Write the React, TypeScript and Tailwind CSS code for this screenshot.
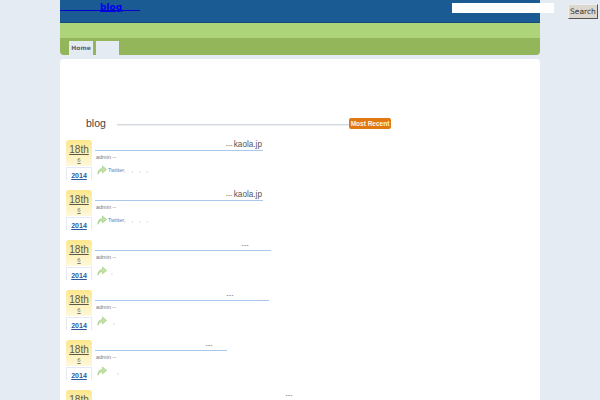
import React from 'react';

const posts = [
  { w: 'w-[168px]', title: 'kaola.jp', big: true, pr: 'pr-px', comma: '' },
  { w: 'w-[168px]', title: 'kaola.jp', big: true, pr: 'pr-px', comma: '' },
  { w: 'w-[176px]', title: '---', big: false, pr: 'pr-[22px]', comma: 'pl-[4px]' },
  { w: 'w-[174px]', title: '---', big: false, pr: 'pr-[35px]', comma: 'pl-[6px]' },
  { w: 'w-[132px]', title: '---', big: false, pr: 'pr-[14px]', comma: 'pl-[10px]' },
  { w: 'w-[220px]', title: '---', big: false, pr: 'pr-[22px]', comma: 'pl-[10px]' },
];

function Arrow() {
  return (
    <svg width="10" height="10" viewBox="0 0 11 11" className="shrink-0">
      <path
        d="M1 10.2C.6 6.400 2.600 4 6 3.800V1l4.600 3.900L6 8.800V6.200C3.900 6.100 2.300 7.600 1 10.200Z"
        fill="#c2e2a6"
        stroke="#9ac67a"
        strokeWidth="0.6"
      />
    </svg>
  );
}

function Post({ p }: { p: (typeof posts)[number] }) {
  return (
    <div className="flex h-[50px] pl-[6px]">
      <div className="w-[26px] shrink-0 text-center">
        <div className="h-[26px] rounded-t-[3px] bg-gradient-to-b from-[#fde78c] to-[#fff8da] pt-[3px]">
          <a className="block text-[10px] leading-[13px] text-[#5a5a4a] underline">18th</a>
          <a className="block text-[6px] leading-[8px] text-[#77776a] underline">6</a>
        </div>
        <div className="mt-px h-[13px] border border-b-0 border-x-[#e3e9f5] border-t-[#e3e9f5] bg-white pt-px">
          <a className="block text-[7px] font-bold leading-[14px] text-[#2a5a9e] underline">2014</a>
        </div>
      </div>
      <div className="ml-[3px]">
        <div className={`${p.w} ${p.pr} h-[11px] border-b border-[#a9c8ea] text-right`}>
          {p.big ? (
            <span className="block text-[8.2px] leading-[10px] text-[#555555]">
              <span className="mr-px text-[5.5px] font-bold tracking-[0.4px] text-[#777777]">---</span>
              {p.title}
            </span>
          ) : (
            <span className="block pt-px text-[6px] font-bold leading-[9px] tracking-[0.5px] text-[#777777]">{p.title}</span>
          )}
        </div>
        <div className="pl-px pt-[2px] text-[5.5px] leading-[8px] text-[#777777]">admin --</div>
        <div className="mt-[3px] flex items-center pl-[2px]">
          <Arrow />
          {p.big ? (
            <span className="ml-px flex pt-px text-[5.5px] leading-[10px] text-[#4f86c6]">
              Twitter,
              <span className="ml-[6px] tracking-[6px] text-[#888888]">,,,</span>
            </span>
          ) : (
            <span className={`${p.comma} pt-[3px] text-[6px] leading-[10px] text-[#777777]`}>,</span>
          )}
        </div>
      </div>
    </div>
  );
}

export default function App() {
  return (
    <div className="relative h-[400px] w-[600px] overflow-hidden bg-[#e4ebf3] font-['Liberation_Sans',sans-serif]">
      <div className="mx-auto w-[480px]">
        <header className="h-[23px] border-b border-[#154a7c] bg-[#1a5b93]">
          <a className="block h-[11px] w-[80px] border-b border-[#0000cc] pl-[40px] font-['DejaVu_Sans',sans-serif] text-[9px] font-bold leading-[14px] text-[#0000ee] underline">
            blog
          </a>
        </header>
        <div className="h-[15px] bg-[#aed47a]" />
        <nav className="flex h-[17px] items-end rounded-b-[4px] bg-[#93b65a] pl-[9px]">
          <span className="h-[14px] w-[24px] bg-[#e4ebf3] text-center font-['DejaVu_Sans',sans-serif] text-[6px] font-bold leading-[14px] text-[#666672]">
            Home
          </span>
          <span className="ml-[3px] h-[14px] w-[23px] bg-[#e4ebf3]" />
        </nav>
        <main className="mt-[4px] h-[400px] rounded-t-[4px] bg-white pt-[58px]">
          <div className="flex h-[23px] items-start">
            <h2 className="ml-[26px] w-[31px] text-[10.5px] leading-[13px] text-[#444444]">blog</h2>
            <div className="mt-[7px] h-px w-[232px] bg-[#d5dbe3] shadow-[0_1px_0_#eeeeee]" />
            <span className="mt-px h-[11px] w-[42px] rounded-[2px] bg-[#e07a10] text-center text-[6.5px] font-bold leading-[11px] text-[#fff5e0]">
              Most Recent
            </span>
          </div>
          {posts.map((p, i) => (
            <Post key={i} p={p} />
          ))}
        </main>
      </div>
      <input className="absolute left-[452px] top-[3px] h-[10px] w-[102px] bg-white" />
      <button className="absolute left-[568px] top-[4px] h-[15px] w-[30px] border border-b-[#555555] border-l-[#eeeeee] border-r-[#555555] border-t-[#eeeeee] bg-[#dcd8d0] font-['DejaVu_Sans',sans-serif] text-[7.5px] leading-[13px] text-[#333333]">
        Search
      </button>
    </div>
  );
}
